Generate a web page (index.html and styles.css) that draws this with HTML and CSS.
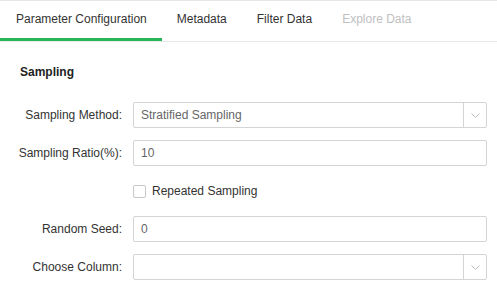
FILE: index.html
```html
<!DOCTYPE html>
<html>
<head>
<meta charset="utf-8">
<link rel="stylesheet" href="styles.css">
</head>
<body>
<div class="tabs">
  <div class="tab active">Parameter Configuration</div>
  <div class="tab">Metadata</div>
  <div class="tab">Filter Data</div>
  <div class="tab disabled">Explore Data</div>
</div>
<div class="content">
  <div class="section-title">Sampling</div>
  <div class="form">
    <div class="row">
      <label class="label">Sampling Method:</label>
      <div class="control select">
        <span class="value">Stratified Sampling</span>
        <span class="arrow"><svg width="9" height="5" viewBox="0 0 9 5"><path d="M0.5 0.5 L4.5 4.5 L8.5 0.5" fill="none" stroke="#bbb" stroke-width="1"/></svg></span>
      </div>
    </div>
    <div class="row">
      <label class="label">Sampling Ratio(%):</label>
      <div class="control"><span class="value">10</span></div>
    </div>
    <div class="row">
      <span class="label"></span>
      <div class="check"><span class="box"></span><span>Repeated Sampling</span></div>
    </div>
    <div class="row">
      <label class="label">Random Seed:</label>
      <div class="control"><span class="value">0</span></div>
    </div>
    <div class="row">
      <label class="label">Choose Column:</label>
      <div class="control select">
        <span class="value"></span>
        <span class="arrow"><svg width="9" height="5" viewBox="0 0 9 5"><path d="M0.5 0.5 L4.5 4.5 L8.5 0.5" fill="none" stroke="#bbb" stroke-width="1"/></svg></span>
      </div>
    </div>
  </div>
</div>
</body>
</html>
```
FILE: styles.css
```css
html, body {
  margin: 0;
  padding: 0;
  background: #fff;
  font-family: "Liberation Sans", Arial, sans-serif;
  font-size: 12px;
  color: #333;
}
.tabs {
  display: flex;
  border-top: 1px solid #e6e6e6;
  border-bottom: 1px solid #e8e8e8;
  height: 40px;
}
.tab {
  padding: 0 15px;
  height: 37px;
  line-height: 37px;
  border-bottom: 3px solid transparent;
  color: #333;
  white-space: nowrap;
}
.tab.active {
  padding-left: 16px;
  border-bottom-color: #27b756;
}
.tab.disabled {
  color: #c0c0c0;
}
.content {
  padding: 0 10px 0 0;
}
.section-title {
  font-weight: bold;
  padding-left: 20px;
  height: 14px;
  line-height: 14px;
  margin-top: 23px;
  color: #222;
}
.form {
  display: flex;
  flex-direction: column;
  gap: 12px;
  margin-top: 23px;
}
.row {
  display: flex;
  align-items: center;
  height: 26px;
}
.label {
  width: 133px;
  text-align: right;
  padding-right: 11px;
  box-sizing: border-box;
  color: #333;
  flex: none;
}
.control {
  flex: 1;
  height: 26px;
  box-sizing: border-box;
  border: 1px solid #d4d4d4;
  border-radius: 2px;
  display: flex;
  align-items: center;
  color: #666;
}
.control .value {
  flex: 1;
  padding-left: 7px;
}
.select .arrow {
  width: 22px;
  height: 100%;
  border-left: 1px solid #d4d4d4;
  display: flex;
  align-items: center;
  justify-content: center;
}
.check {
  display: flex;
  align-items: center;
  gap: 6px;
  color: #333;
}
.check .box {
  width: 13px;
  height: 13px;
  box-sizing: border-box;
  border: 1px solid #c8c8c8;
  border-radius: 2px;
}
```
